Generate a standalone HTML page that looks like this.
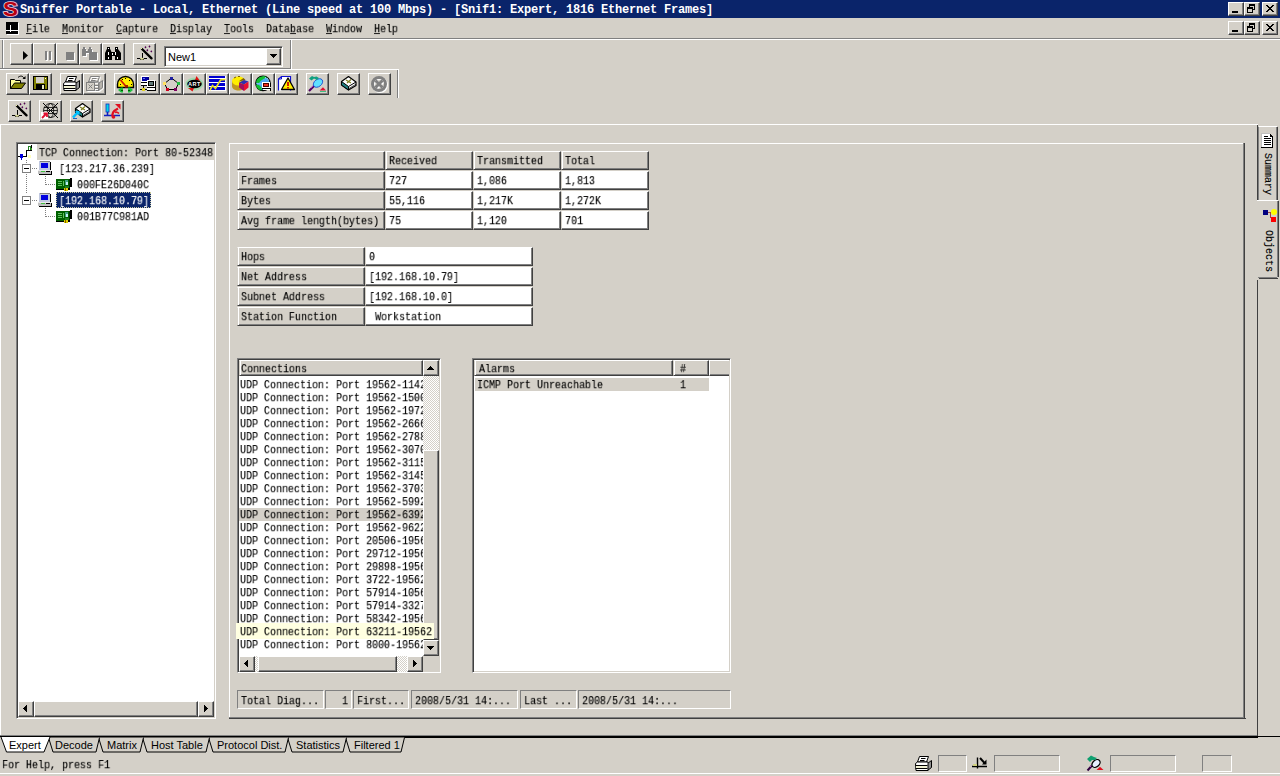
<!DOCTYPE html><html><head><meta charset="utf-8"><title>Sniffer</title><style>
html,body{margin:0;padding:0}
body{width:1280px;height:776px;background:#d4d0c8;position:relative;overflow:hidden;font-family:"Liberation Mono",monospace}
div{position:absolute;box-sizing:border-box}
svg{position:absolute;display:block}
.m{font:12px/12px "Liberation Mono",monospace;white-space:pre;color:#000;transform:scale(.8333,.92);transform-origin:0 100%;will-change:transform;-webkit-text-stroke-width:.15px}
.mb{font:bold 12px/12px "Liberation Mono",monospace;letter-spacing:-0.2px;white-space:pre;color:#fff}
.s{font:11px/12px "Liberation Sans",sans-serif;white-space:pre;color:#000}
.btn{background:#d4d0c8;border:1px solid;border-color:#fff #404040 #404040 #fff;box-shadow:inset -1px -1px 0 #808080}
.cellr{background:#d4d0c8;border:1px solid;border-color:#fff #404040 #404040 #d4d0c8;box-shadow:inset 1px 0 0 #fff, inset -1px -1px 0 #808080}
.cellw{background:#fff;border:1px solid;border-color:#fff #404040 #404040 #d4d0c8;box-shadow:inset -1px -1px 0 #808080}
.sunk1{border:1px solid;border-color:#808080 #fff #fff #808080}
.sunk2{border:1px solid;border-color:#808080 #fff #fff #808080;box-shadow:inset 1px 1px 0 #404040, inset -1px -1px 0 #d4d0c8}
.chk{background-color:#fff;background-image:linear-gradient(45deg,#d4d0c8 25%,transparent 25%,transparent 75%,#d4d0c8 75%),linear-gradient(45deg,#d4d0c8 25%,transparent 25%,transparent 75%,#d4d0c8 75%);background-size:2px 2px;background-position:0 0,1px 1px}
u{text-decoration:none;display:inline-block;height:10px;border-bottom:1px solid #000}
</style></head><body><div class="" style="left:0px;top:0px;width:1280px;height:18px;background:#0a246a"></div>
<div class="mb" style="left:20px;top:4px;">Sniffer Portable - Local, Ethernet (Line speed at 100 Mbps) - [Snif1: Expert, 1816 Ethernet Frames]</div>
<svg style="left:1px;top:0px" width="19" height="18" viewBox="0 0 19 18"><text x="9.5" y="16" text-anchor="middle" font-family="Liberation Sans" font-weight="bold" font-size="20" fill="#b80010" stroke="#f0d0e0" stroke-width="1.6" paint-order="stroke" transform="translate(9.5 0) scale(1.12 1) translate(-9.5 0)">S</text></svg>
<div class="btn" style="left:1228px;top:2px;width:16px;height:14px;"></div>
<div class="btn" style="left:1244px;top:2px;width:16px;height:14px;"></div>
<div class="btn" style="left:1262px;top:2px;width:16px;height:14px;"></div>
<div class="" style="left:1232px;top:11px;width:6px;height:2px;background:#000"></div>
<svg style="left:1244px;top:2px" width="16" height="14" viewBox="0 0 16 14" shape-rendering="crispEdges"><path d="M5 2h6v2h-6z M5 4h1v1h-1z M10 4h1v4h-1z M9 7h1v1h-1z" fill="#000"/><path d="M3 5h6v2h-6z M3 7h1v4h-1z M8 7h1v4h-1z M3 10h6v1h-6z" fill="#000"/></svg>
<svg style="left:1262px;top:2px" width="16" height="14" viewBox="0 0 16 14" shape-rendering="crispEdges"><path d="M4 3h2v1h1v1h2v-1h1v-1h2v1h-1v1h-1v1h-1v1h1v1h1v1h1v1h-2v-1h-1v-1h-2v1h-1v1h-2v-1h1v-1h1v-1h1v-1h-1v-1h-1v-1h-1z" fill="#000"/></svg>
<div class="btn" style="left:1228px;top:21px;width:16px;height:14px;"></div>
<div class="btn" style="left:1244px;top:21px;width:16px;height:14px;"></div>
<div class="btn" style="left:1262px;top:21px;width:16px;height:14px;"></div>
<div class="" style="left:1232px;top:30px;width:6px;height:2px;background:#000"></div>
<svg style="left:1244px;top:21px" width="16" height="14" viewBox="0 0 16 14" shape-rendering="crispEdges"><path d="M5 2h6v2h-6z M5 4h1v1h-1z M10 4h1v4h-1z M9 7h1v1h-1z" fill="#000"/><path d="M3 5h6v2h-6z M3 7h1v4h-1z M8 7h1v4h-1z M3 10h6v1h-6z" fill="#000"/></svg>
<svg style="left:1262px;top:21px" width="16" height="14" viewBox="0 0 16 14" shape-rendering="crispEdges"><path d="M4 3h2v1h1v1h2v-1h1v-1h2v1h-1v1h-1v1h-1v1h1v1h1v1h1v1h-2v-1h-1v-1h-2v1h-1v1h-2v-1h1v-1h1v-1h1v-1h-1v-1h-1v-1h-1z" fill="#000"/></svg>
<svg style="left:6px;top:22px" width="13" height="13" viewBox="0 0 13 13" shape-rendering="crispEdges"><rect width="12" height="12" fill="#000"/><rect x="12" y="1" width="1" height="12" fill="#fff"/><rect x="1" y="12" width="12" height="1" fill="#fff"/><rect x="0" y="8" width="12" height="1" fill="#fff"/><rect x="4" y="3" width="1" height="5" fill="#fff"/><rect x="3" y="8" width="3" height="1" fill="#fff"/><rect x="4" y="9" width="1" height="1" fill="#fff"/></svg>
<div class="m" style="left:26px;top:23px"><u>F</u>ile</div>
<div class="m" style="left:62px;top:23px"><u>M</u>onitor</div>
<div class="m" style="left:116px;top:23px"><u>C</u>apture</div>
<div class="m" style="left:170px;top:23px"><u>D</u>isplay</div>
<div class="m" style="left:224px;top:23px"><u>T</u>ools</div>
<div class="m" style="left:266px;top:23px">Data<u>b</u>ase</div>
<div class="m" style="left:326px;top:23px"><u>W</u>indow</div>
<div class="m" style="left:374px;top:23px"><u>H</u>elp</div>
<div class="" style="left:0px;top:38px;width:1280px;height:1px;background:#808080"></div>
<div class="" style="left:0px;top:39px;width:1280px;height:1px;background:#ffffff"></div>
<div class="" style="left:0px;top:68px;width:291px;height:1px;background:#808080"></div>
<div class="" style="left:0px;top:69px;width:399px;height:1px;background:#ffffff"></div>
<div class="" style="left:290px;top:40px;width:1px;height:28px;background:#808080"></div>
<div class="" style="left:291px;top:40px;width:1px;height:29px;background:#ffffff"></div>
<div class="" style="left:2px;top:40px;width:1px;height:28px;background:#808080"></div>
<div class="" style="left:3px;top:40px;width:1px;height:28px;background:#ffffff"></div>
<div class="btn" style="left:10px;top:43px;width:23px;height:22px;"></div>
<div class="btn" style="left:33px;top:43px;width:23px;height:22px;"></div>
<div class="btn" style="left:56px;top:43px;width:23px;height:22px;"></div>
<div class="btn" style="left:79px;top:43px;width:23px;height:22px;"></div>
<div class="btn" style="left:102px;top:43px;width:23px;height:22px;"></div>
<div class="btn" style="left:133px;top:43px;width:23px;height:22px;"></div>
<div class="sunk2" style="left:164px;top:46px;width:119px;height:21px;background:#fff"></div>
<div class="s" style="left:168px;top:51px;">New1</div>
<div class="btn" style="left:266px;top:48px;width:15px;height:17px;"></div>
<svg style="left:270px;top:54px" width="7" height="4" viewBox="0 0 7 4" shape-rendering="crispEdges"><path d="M0 0h7v1h-1v1h-1v1h-1v1h-1v-1h-1v-1h-1v-1h-1z" fill="#000"/></svg>
<div class="" style="left:397px;top:70px;width:1px;height:28px;background:#808080"></div>
<div class="" style="left:398px;top:69px;width:1px;height:29px;background:#ffffff"></div>
<div class="btn" style="left:6px;top:73px;width:23px;height:22px;"></div>
<div class="btn" style="left:29px;top:73px;width:23px;height:22px;"></div>
<div class="btn" style="left:60px;top:73px;width:23px;height:22px;"></div>
<div class="btn" style="left:83px;top:73px;width:23px;height:22px;"></div>
<div class="btn" style="left:114px;top:73px;width:23px;height:22px;"></div>
<div class="btn" style="left:137px;top:73px;width:23px;height:22px;"></div>
<div class="btn" style="left:160px;top:73px;width:23px;height:22px;"></div>
<div class="btn" style="left:183px;top:73px;width:23px;height:22px;"></div>
<div class="btn" style="left:206px;top:73px;width:23px;height:22px;"></div>
<div class="btn" style="left:229px;top:73px;width:23px;height:22px;"></div>
<div class="btn" style="left:252px;top:73px;width:23px;height:22px;"></div>
<div class="btn" style="left:275px;top:73px;width:23px;height:22px;"></div>
<div class="btn" style="left:306px;top:73px;width:23px;height:22px;"></div>
<div class="btn" style="left:337px;top:73px;width:23px;height:22px;"></div>
<div class="btn" style="left:368px;top:73px;width:23px;height:22px;"></div>
<div class="btn" style="left:8px;top:100px;width:23px;height:22px;"></div>
<div class="btn" style="left:39px;top:100px;width:23px;height:22px;"></div>
<div class="btn" style="left:70px;top:100px;width:23px;height:22px;"></div>
<div class="btn" style="left:101px;top:100px;width:23px;height:22px;"></div>
<svg style="left:10px;top:43px" width="23" height="22" viewBox="0 0 23 22"><path d="M13 8v9l5-4.5z" fill="#000"/></svg>
<svg style="left:33px;top:43px" width="23" height="22" viewBox="0 0 23 22"><g transform="translate(1,1)" fill="#fff" stroke="#fff"><rect x="12" y="8" width="2" height="9" stroke="none"/><rect x="16" y="8" width="2" height="9" stroke="none"/></g><g fill="#808080" stroke="#808080"><rect x="12" y="8" width="2" height="9" stroke="none"/><rect x="16" y="8" width="2" height="9" stroke="none"/></g></svg>
<svg style="left:56px;top:43px" width="23" height="22" viewBox="0 0 23 22"><g transform="translate(1,1)" fill="#fff" stroke="#fff"><rect x="10" y="9" width="8" height="8" stroke="none"/></g><g fill="#808080" stroke="#808080"><rect x="10" y="9" width="8" height="8" stroke="none"/></g></svg>
<svg style="left:79px;top:43px" width="23" height="22" viewBox="0 0 23 22"><g transform="translate(1,1)" fill="#fff" stroke="#fff"><path d="M4 4h2v2h1v7h-4v-7h1z" stroke="none"/><path d="M10 4h2v2h1v3h-4v-3h1z" stroke="none"/><rect x="6" y="8" width="4" height="2" stroke="none"/><rect x="10" y="9" width="8" height="8" stroke="none"/></g><g fill="#808080" stroke="#808080"><path d="M4 4h2v2h1v7h-4v-7h1z" stroke="none"/><path d="M10 4h2v2h1v3h-4v-3h1z" stroke="none"/><rect x="6" y="8" width="4" height="2" stroke="none"/><rect x="10" y="9" width="8" height="8" stroke="none"/></g></svg>
<svg style="left:102px;top:43px" width="23" height="22" viewBox="0 0 23 22"><g fill="#000"><rect x="5" y="4" width="3" height="3"/><rect x="13" y="4" width="3" height="3"/><path d="M5 6h3l2 4v7h-6v-7z"/><path d="M13 6h3l2 4v7h-6v-7z" transform="translate(21,0) scale(-1,1) translate(0,0)"/><path d="M13 6h3l3 4v7h-6v-7z"/><rect x="9" y="9" width="4" height="4"/></g><g fill="#fff"><rect x="6" y="5" width="1" height="1"/><rect x="14" y="5" width="1" height="1"/><rect x="6" y="9" width="1" height="3"/><rect x="13" y="9" width="1" height="3"/><rect x="6" y="14" width="1" height="2"/><rect x="15" y="14" width="1" height="2"/><rect x="10" y="10" width="1" height="2"/></g></svg>
<svg style="left:133px;top:43px" width="23" height="22" viewBox="0 0 23 22"><path d="M9.500 10v5M4 15.500h10" stroke="#000" stroke-width="1" fill="none"/><path d="M7 16.500h4" stroke="#000" stroke-width="1"/><ellipse cx="9" cy="15.800" rx="2" ry="1" fill="#e0e0a0"/><path d="M9 6l9.500 9.300" stroke="#000" stroke-width="2.400" stroke-linecap="round"/><rect x="8" y="5" width="1" height="1" fill="#f0f0a0"/><g fill="#500050"><path d="M12.500 3l1 1.200l-1 1.200l-1-1.200z"/><path d="M16.500 2.300l1 1.200l-1 1.200l-1-1.200z"/><path d="M14.300 6.100l1 1.200l-1 1.200l-1-1.200z"/><path d="M18.300 7.200l1 1.200l-1 1.200l-1-1.200z"/></g></svg>
<svg style="left:6px;top:73px" width="23" height="22" viewBox="0 0 23 22"><path d="M4.500 15.500v-9h4l1 1h5v8z" fill="#ffff99" stroke="#000"/><path d="M4.500 15.500l4-5.500h11l-4 5.500z" fill="#808000" stroke="#000"/><path d="M12 4.500c2-2 5-2 6 1" fill="none" stroke="#000"/><path d="M16.500 6h3v-3z" fill="#000"/></svg>
<svg style="left:29px;top:73px" width="23" height="22" viewBox="0 0 23 22"><rect x="4.5" y="3.5" width="14" height="13" fill="#808000" stroke="#000"/><rect x="7" y="4" width="8" height="6" fill="#d4d0c8"/><rect x="7" y="11" width="9" height="6" fill="#000"/><rect x="13" y="12" width="2" height="4" fill="#e8e8c0"/><rect x="16" y="5" width="1" height="1" fill="#fff"/></svg>
<svg style="left:60px;top:73px" width="23" height="22" viewBox="0 0 23 22"><path d="M7.500 3.500h9l-2 5.500h-9z" fill="#fff" stroke="#000"/><path d="M9 5.500h4.500M8 7.500h4.500" stroke="#000"/><path d="M15.500 10.500l4-3v7l-4 3z" fill="#909090" stroke="#000"/><path d="M3.500 10.500l2-1.500h10.500v1.500v7h-12z" fill="#fff" stroke="#000"/><path d="M3.500 12.500h12M3.500 15.500h12" stroke="#000"/><rect x="4" y="13" width="11" height="2" fill="#f0f0d0"/></svg>
<svg style="left:83px;top:73px" width="23" height="22" viewBox="0 0 23 22"><g transform="translate(1,1)"><path d="M7.500 3.500h9l-2 5.500h-9z" fill="none" stroke="#fff"/><path d="M9 5.500h4.500M8 7.500h4.500" stroke="#fff"/><path d="M15.500 10.500l4-3v7l-4 3z" fill="none" stroke="#fff"/><path d="M3.500 10.500l2-1.500h10.500v1.500v7h-12z" fill="none" stroke="#fff"/><path d="M3.500 12.500h12M3.500 15.500h12" stroke="#fff"/></g><path d="M7.500 3.500h9l-2 5.500h-9z" fill="none" stroke="#808080"/><path d="M9 5.500h4.500M8 7.500h4.500" stroke="#808080"/><path d="M15.500 10.500l4-3v7l-4 3z" fill="#b8b4ac" stroke="#808080"/><path d="M3.500 10.500l2-1.500h10.500v1.500v7h-12z" fill="none" stroke="#808080"/><path d="M3.500 12.500h12M3.500 15.500h12" stroke="#808080"/><rect x="3.500" y="9.500" width="8" height="8" fill="#d4d0c8" stroke="#808080"/><path d="M5.500 11.500l4 4M9.500 11.500l-4 4" stroke="#808080"/><path d="M12.500 18.500v-1M4.500 18.500h8" stroke="#fff"/></svg>
<svg style="left:114px;top:73px" width="23" height="22" viewBox="0 0 23 22"><path d="M3.500 14.500v-3a8 8 0 0 1 16 0v3z" fill="#ffee00" stroke="#000" stroke-width="1.400"/><path d="M12.500 14l-6-7" stroke="#d02000" stroke-width="1.800"/><path d="M11 12h3v2.500h-3z" fill="#a02000"/><g fill="#000"><rect x="6" y="11" width="1" height="1"/><rect x="8" y="6" width="1" height="1"/><rect x="11" y="5" width="1" height="1"/><rect x="15" y="7" width="1" height="1"/><rect x="17" y="11" width="1" height="1"/></g><path d="M4 17l3-2.500h2v5h-2z" fill="#20c040"/><path d="M19 17l-3-2.500h-2v5h2z" fill="#20c040"/><path d="M7 17.500h2M14 17.500h2" stroke="#006000"/></svg>
<svg style="left:137px;top:73px" width="23" height="22" viewBox="0 0 23 22"><g shape-rendering="crispEdges"><rect x="4" y="3" width="8" height="6" fill="#fff"/><rect x="5" y="4" width="6" height="4" fill="#0000a0"/><rect x="6" y="5" width="2" height="1" fill="#6070ff"/><rect x="11" y="4" width="1" height="5" fill="#000080"/><rect x="4" y="9" width="7" height="1" fill="#000"/><rect x="4" y="10" width="6" height="2" fill="#fff"/><rect x="4" y="12" width="6" height="1" fill="#000"/><rect x="6" y="13" width="1" height="3" fill="#000"/><rect x="3" y="16" width="7" height="1" fill="#000"/><rect x="5" y="15" width="3" height="3" fill="#e0d020"/><rect x="10" y="7" width="8" height="7" fill="#fff"/><rect x="11" y="8" width="6" height="5" fill="#000"/><rect x="12" y="9" width="4" height="3" fill="#607878"/><rect x="18" y="8" width="1" height="9" fill="#000"/><rect x="10" y="14" width="8" height="1" fill="#000"/><rect x="10" y="15" width="8" height="2" fill="#fff"/><rect x="10" y="17" width="9" height="1" fill="#000"/></g></svg>
<svg style="left:160px;top:73px" width="23" height="22" viewBox="0 0 23 22"><path d="M11.500 5l-7 5.500l3 6h8l3-6z" fill="none" stroke="#000"/><rect x="10" y="4" width="3" height="3" fill="#2020a0"/><rect x="3" y="9" width="3" height="3" fill="#ffe060"/><rect x="17" y="9" width="3" height="3" fill="#20c040"/><rect x="6" y="15" width="3" height="3" fill="#d00020"/><rect x="14" y="15" width="3" height="3" fill="#800060"/></svg>
<svg style="left:183px;top:73px" width="23" height="22" viewBox="0 0 23 22"><ellipse cx="11.500" cy="11" rx="9" ry="6.500" fill="#80e0a0" opacity=".6"/><path d="M12 7l1.500-4l3.500 5z" fill="#e01010"/><path d="M11 15l-1.500 3.500l-4.500-3.500z" fill="#e01010"/><ellipse cx="11.500" cy="11" rx="7.300" ry="4.200" fill="#000"/><text x="11.500" y="13" font-family="Liberation Sans" font-weight="bold" font-size="5.500" fill="#fff" text-anchor="middle" letter-spacing=".5">ART</text></svg>
<svg style="left:206px;top:73px" width="23" height="22" viewBox="0 0 23 22"><rect x="3" y="3" width="17" height="15" fill="#fff"/><g fill="#0000d0"><rect x="3" y="3" width="16" height="2"/><rect x="3" y="6" width="16" height="3"/><rect x="3" y="10" width="16" height="3"/><rect x="3" y="14" width="16" height="3"/></g><path d="M4 17l2.500-4.500l3 3l5-8.500l5-.5" fill="none" stroke="#e8e020" stroke-width="1.600"/></svg>
<svg style="left:229px;top:73px" width="23" height="22" viewBox="0 0 23 22"><path d="M3 8v5c0 6 13 6 13 0v-5z" fill="#c09820"/><ellipse cx="9.500" cy="8" rx="6.500" ry="4.500" fill="#ffee00"/><path d="M9.500 8.500l5-3.500l2 2z" fill="#806000"/><path d="M10 9.500l5-2.500l4.500 1.500l-4.500 3z" fill="#3030b0"/><path d="M10 9.500l5 2v6.500l-5-3.500z" fill="#a01060"/><path d="M15 11.500l4.500-3v6l-4.500 3.500z" fill="#e81030"/><path d="M5 5l2-1M9 3.500h2" stroke="#806000" stroke-width="1"/></svg>
<svg style="left:252px;top:73px" width="23" height="22" viewBox="0 0 23 22"><circle cx="11" cy="10.300" r="7.200" fill="#50a8f0" stroke="#000" stroke-width="1.400"/><path d="M4 9.500l.8-3l3-2.500l4-1l3.500 1.200l-3.500 1.500l-3 2l-2 2.500z" fill="#10c030"/><path d="M4 11.500l3 .5l2.500 2.500v3l-3-1l-2.200-3z" fill="#10c030"/><path d="M13 4.500l3 1.500l1.500 2" stroke="#a0e8ff" stroke-width="1.200" fill="none" stroke-dasharray="1 1"/><path d="M4.500 10.500l5 .5" stroke="#a0e8ff" stroke-width="1" stroke-dasharray="1 1"/><g shape-rendering="crispEdges"><rect x="10" y="9" width="8" height="6" fill="#fff"/><rect x="11" y="10" width="6" height="4" fill="#500000"/><rect x="12" y="11" width="4" height="2" fill="#f03020"/><rect x="10" y="15" width="8" height="1" fill="#000"/><rect x="11" y="16" width="7" height="1" fill="#fff"/><rect x="18" y="10" width="1" height="4" fill="#000"/><rect x="18" y="15" width="1" height="3" fill="#000"/></g></svg>
<svg style="left:275px;top:73px" width="23" height="22" viewBox="0 0 23 22"><path d="M3.500 17.500v-11.500l3-2.500h9v14" fill="#fff" stroke="#1010d0" stroke-width="1.200"/><path d="M3.500 6h3v-2.500" fill="none" stroke="#1010d0"/><path d="M13 5l-6.500 11.500h13z" fill="#ffee00" stroke="#000" stroke-width="1.300" stroke-linejoin="round"/><rect x="12" y="9" width="2" height="4" fill="#d02000"/><rect x="12" y="14" width="2" height="1.500" fill="#d02000"/></svg>
<svg style="left:306px;top:73px" width="23" height="22" viewBox="0 0 23 22"><path d="M8.500 12.500l-5.500 5.500" stroke="#500060" stroke-width="2.200"/><path d="M8 12l-3 3" stroke="#c050d0" stroke-width=".8"/><ellipse cx="12" cy="10" rx="5.200" ry="3.600" fill="#60e0ff" stroke="#2050d0" stroke-width=".9" transform="rotate(-38 12 10)"/><path d="M3 5.500l3-2.500l2 1l2.500-.5l2.500 1.500l-2 2l-3-1.500l-2.500 2z" fill="#10a080"/><path d="M13.500 17.500l3.500-3.200l3 3.200z" fill="#e01030"/><path d="M14 18.500h6" stroke="#40c080" /></svg>
<svg style="left:337px;top:73px" width="23" height="22" viewBox="0 0 23 22"><path d="M4.500 8.500l7-5l7.500 5.500v3.500l-7.500 4.500l-7-5z" fill="#fff" stroke="#000" stroke-width="1.200" stroke-linejoin="round"/><path d="M4.500 8.500l7 5v3.500l-7-5z" fill="#208080" stroke="#000" stroke-width="1"/><path d="M11.500 13.500l7.500-4.500" stroke="#000"/><path d="M12 15.500l7-4.300" stroke="#000" stroke-width=".7"/><path d="M9 7l5 3M14 6.500l-4 3.500" stroke="#808020" stroke-width="1.200"/></svg>
<svg style="left:368px;top:73px" width="23" height="22" viewBox="0 0 23 22"><g transform="translate(1,1)" fill="#fff" stroke="#fff"><circle cx="11" cy="11" r="6.500" fill="none" stroke-width="3"/><path d="M7.500 7.500l7 7M14.500 7.500l-7 7" stroke-width="3" fill="none"/></g><g fill="#808080" stroke="#808080"><circle cx="11" cy="11" r="6.500" fill="none" stroke-width="3"/><path d="M7.500 7.500l7 7M14.500 7.500l-7 7" stroke-width="3" fill="none"/></g></svg>
<svg style="left:8px;top:100px" width="23" height="22" viewBox="0 0 23 22"><path d="M9.500 10v5M4 15.500h10" stroke="#000" stroke-width="1" fill="none"/><path d="M7 16.500h4" stroke="#000" stroke-width="1"/><ellipse cx="9" cy="15.800" rx="2" ry="1" fill="#e0e0a0"/><path d="M9 6l9.500 9.300" stroke="#000" stroke-width="2.400" stroke-linecap="round"/><rect x="8" y="5" width="1" height="1" fill="#f0f0a0"/><g fill="#500050"><path d="M12.500 3l1 1.200l-1 1.200l-1-1.200z"/><path d="M16.500 2.300l1 1.200l-1 1.200l-1-1.200z"/><path d="M14.300 6.100l1 1.200l-1 1.200l-1-1.200z"/><path d="M18.300 7.200l1 1.200l-1 1.200l-1-1.200z"/></g></svg>
<svg style="left:39px;top:100px" width="23" height="22" viewBox="0 0 23 22"><g fill="none" stroke="#000" stroke-width=".8"><circle cx="11.500" cy="10.500" r="7"/><ellipse cx="11.500" cy="10.500" rx="3.200" ry="7"/><path d="M5 7.500h13M5 13.500h13M4.500 10.500h14"/><path d="M4 3l15 15M19 3l-15 15" stroke-width="1"/></g><rect x="2" y="12" width="7" height="7" fill="#fff"/><path d="M3 18l4-4M4.500 13.500h3.500v3.500" stroke="#e01030" stroke-width="1.800" fill="none"/></svg>
<svg style="left:70px;top:100px" width="23" height="22" viewBox="0 0 23 22"><g transform="translate(1,0)"><path d="M4.500 8.500l7-5l7.500 5.500v3.500l-7.500 4.500l-7-5z" fill="#fff" stroke="#000" stroke-width="1.200" stroke-linejoin="round"/><path d="M4.500 8.500l7 5v3.500l-7-5z" fill="#208080" stroke="#000" stroke-width="1"/><path d="M11.500 13.500l7.500-4.500" stroke="#000"/><path d="M12 15.500l7-4.300" stroke="#000" stroke-width=".7"/><path d="M9 7l5 3M14 6.500l-4 3.500" stroke="#808020" stroke-width="1.200"/></g><path d="M3 17.500l4.500-5" stroke="#00c0ff" stroke-width="2.600"/><path d="M5 11h4.500v5z" fill="#00c0ff"/><path d="M3 18.500h4" stroke="#2060c0"/></svg>
<svg style="left:101px;top:100px" width="23" height="22" viewBox="0 0 23 22"><rect x="5" y="4" width="3" height="8" fill="#00d8e8" stroke="#1030c0" stroke-width=".8"/><path d="M6.500 12v3M3 15.500h16" stroke="#1020c0" stroke-width="1.600"/><path d="M12 17.500c-2-4 1-7 5-9" fill="none" stroke="#e01020" stroke-width="2.200"/><path d="M14 4h5.500v5.500z" fill="#e01020"/><circle cx="12.500" cy="17" r="1.800" fill="#e01020"/><path d="M14 12.500c2-1 3 0 4 1" stroke="#e01020" stroke-width="1.600" fill="none"/></svg>
<div class="" style="left:0px;top:124px;width:1258px;height:1px;background:#ffffff"></div>
<div class="" style="left:0px;top:124px;width:1px;height:612px;background:#ffffff"></div>
<div class="" style="left:0px;top:735px;width:1258px;height:1px;background:#808080"></div>
<div class="" style="left:0px;top:736px;width:1280px;height:1px;background:#000"></div>
<div class="" style="left:50px;top:737px;width:1208px;height:1px;background:#000"></div>
<div class="" style="left:1257px;top:125px;width:1px;height:75px;background:#404040"></div>
<div class="" style="left:1257px;top:280px;width:1px;height:456px;background:#404040"></div>
<div class="sunk2" style="left:16px;top:142px;width:200px;height:577px;background:#fff"></div>
<div class="" style="left:229px;top:143px;width:1015px;height:1px;background:#ffffff"></div>
<div class="" style="left:229px;top:143px;width:1px;height:575px;background:#ffffff"></div>
<div class="" style="left:229px;top:717px;width:1016px;height:1px;background:#808080"></div>
<div class="" style="left:229px;top:718px;width:1017px;height:1px;background:#404040"></div>
<div class="" style="left:1243px;top:143px;width:1px;height:575px;background:#808080"></div>
<div class="" style="left:1244px;top:143px;width:1px;height:576px;background:#404040"></div>
<div class="" style="left:37px;top:144px;width:177px;height:16px;background:#d4d0c8"></div>
<div class="m" style="left:39px;top:147px;">TCP Connection: Port 80-52348</div>
<div class="m" style="left:59px;top:163px;">[123.217.36.239]</div>
<div class="m" style="left:77px;top:179px;">000FE26D040C</div>
<div class="" style="left:56px;top:192px;width:95px;height:16px;background:#0a246a;border:1px dotted #c8c8a0"></div>
<div class="m" style="left:59px;top:195px;color:#fff">[192.168.10.79]</div>
<div class="m" style="left:77px;top:211px;">001B77C981AD</div>
<div class="" style="left:26px;top:160px;width:1px;height:33px;background-image:linear-gradient(#808080 50%,transparent 50%);background-size:1px 2px"></div>
<div class="" style="left:45px;top:176px;width:1px;height:9px;background-image:linear-gradient(#808080 50%,transparent 50%);background-size:1px 2px"></div>
<div class="" style="left:45px;top:208px;width:1px;height:9px;background-image:linear-gradient(#808080 50%,transparent 50%);background-size:1px 2px"></div>
<div class="" style="left:32px;top:168px;width:6px;height:1px;background-image:linear-gradient(90deg,#808080 50%,transparent 50%);background-size:2px 1px"></div>
<div class="" style="left:32px;top:200px;width:6px;height:1px;background-image:linear-gradient(90deg,#808080 50%,transparent 50%);background-size:2px 1px"></div>
<div class="" style="left:46px;top:184px;width:10px;height:1px;background-image:linear-gradient(90deg,#808080 50%,transparent 50%);background-size:2px 1px"></div>
<div class="" style="left:46px;top:216px;width:10px;height:1px;background-image:linear-gradient(90deg,#808080 50%,transparent 50%);background-size:2px 1px"></div>
<div class="" style="left:22px;top:164px;width:9px;height:9px;background:#fff;border:1px solid #808080"></div>
<div class="" style="left:24px;top:168px;width:5px;height:1px;background:#000"></div>
<div class="" style="left:22px;top:196px;width:9px;height:9px;background:#fff;border:1px solid #808080"></div>
<div class="" style="left:24px;top:200px;width:5px;height:1px;background:#000"></div>
<svg style="left:18px;top:144px" width="16" height="16" viewBox="0 0 16 16" shape-rendering="crispEdges"><path d="M0 12h8v-6h5v-5h1v6h-5v6h-9z" fill="#000"/><rect x="2" y="10" width="3" height="4" fill="#0000e0"/><rect x="3" y="14" width="1" height="2" fill="#0000e0"/><path d="M10 2h3v4h-1v-3h-1v3h-1z" fill="#208020"/><rect x="13" y="4" width="1" height="2" fill="#40a020"/><rect x="10" y="11" width="3" height="3" fill="#ffffc0"/></svg>
<svg style="left:38px;top:161px" width="15" height="14" viewBox="0 0 15 14" shape-rendering="crispEdges"><rect x="1" y="0" width="11" height="9" fill="#c0c8e0"/><rect x="12" y="1" width="1" height="9" fill="#000"/><rect x="2" y="0" width="10" height="1" fill="#808080"/><rect x="3" y="2" width="7" height="5" fill="#0000e0"/><rect x="0" y="9" width="13" height="4" fill="#c0c0c0"/><rect x="0" y="9" width="13" height="1" fill="#e8e8e8"/><rect x="3" y="10" width="4" height="1" fill="#40c040"/><rect x="8" y="10" width="4" height="1" fill="#000"/><rect x="13" y="10" width="1" height="4" fill="#000"/><rect x="1" y="13" width="13" height="1" fill="#000"/></svg>
<svg style="left:38px;top:193px" width="15" height="14" viewBox="0 0 15 14" shape-rendering="crispEdges"><rect x="1" y="0" width="11" height="9" fill="#c0c8e0"/><rect x="12" y="1" width="1" height="9" fill="#000"/><rect x="2" y="0" width="10" height="1" fill="#808080"/><rect x="3" y="2" width="7" height="5" fill="#0000e0"/><rect x="0" y="9" width="13" height="4" fill="#c0c0c0"/><rect x="0" y="9" width="13" height="1" fill="#e8e8e8"/><rect x="3" y="10" width="4" height="1" fill="#40c040"/><rect x="8" y="10" width="4" height="1" fill="#000"/><rect x="13" y="10" width="1" height="4" fill="#000"/><rect x="1" y="13" width="13" height="1" fill="#000"/></svg>
<svg style="left:56px;top:178px" width="17" height="14" viewBox="0 0 17 14" shape-rendering="crispEdges"><rect x="0" y="1" width="14" height="10" fill="#006000"/><rect x="14" y="0" width="2" height="9" fill="#000"/><rect x="13" y="1" width="1" height="10" fill="#003000"/><g fill="#60c060"><rect x="2" y="3" width="4" height="1"/><rect x="2" y="5" width="4" height="1"/><rect x="2" y="7" width="4" height="1"/><rect x="7" y="3" width="1" height="5"/></g><rect x="9" y="2" width="3" height="5" fill="#40a080"/><rect x="10" y="4" width="2" height="3" fill="#c0f0f0"/><rect x="9" y="8" width="4" height="2" fill="#208020"/><rect x="8" y="10" width="4" height="3" fill="#e0d000"/><rect x="9" y="10" width="1" height="3" fill="#806000"/><rect x="0" y="11" width="8" height="1" fill="#000"/><rect x="12" y="10" width="2" height="2" fill="#000"/></svg>
<svg style="left:56px;top:210px" width="17" height="14" viewBox="0 0 17 14" shape-rendering="crispEdges"><rect x="0" y="1" width="14" height="10" fill="#006000"/><rect x="14" y="0" width="2" height="9" fill="#000"/><rect x="13" y="1" width="1" height="10" fill="#003000"/><g fill="#60c060"><rect x="2" y="3" width="4" height="1"/><rect x="2" y="5" width="4" height="1"/><rect x="2" y="7" width="4" height="1"/><rect x="7" y="3" width="1" height="5"/></g><rect x="9" y="2" width="3" height="5" fill="#40a080"/><rect x="10" y="4" width="2" height="3" fill="#c0f0f0"/><rect x="9" y="8" width="4" height="2" fill="#208020"/><rect x="8" y="10" width="4" height="3" fill="#e0d000"/><rect x="9" y="10" width="1" height="3" fill="#806000"/><rect x="0" y="11" width="8" height="1" fill="#000"/><rect x="12" y="10" width="2" height="2" fill="#000"/></svg>
<div class="" style="left:18px;top:701px;width:196px;height:16px;background:#d4d0c8"></div>
<div class="btn" style="left:18px;top:701px;width:16px;height:16px;"></div>
<div class="btn" style="left:198px;top:701px;width:16px;height:16px;"></div>
<div class="btn" style="left:34px;top:701px;width:164px;height:16px;"></div>
<svg style="left:23px;top:705px" width="4" height="7" viewBox="0 0 4 7" shape-rendering="crispEdges"><path d="M3 0h1v7h-1v-1h-1v-1h-1v-1h-1v-1h1v-1h1v-1h1z" fill="#000"/></svg>
<svg style="left:204px;top:705px" width="4" height="7" viewBox="0 0 4 7" shape-rendering="crispEdges"><path d="M0 0h1v1h1v1h1v1h1v1h-1v1h-1v1h-1v1h-1z" fill="#000"/></svg>
<div class="cellr" style="left:237px;top:151px;width:148px;height:19px;"></div>
<div class="cellr" style="left:385px;top:151px;width:88px;height:19px;"></div>
<div class="m" style="left:389px;top:155px;">Received</div>
<div class="cellr" style="left:473px;top:151px;width:88px;height:19px;"></div>
<div class="m" style="left:477px;top:155px;">Transmitted</div>
<div class="cellr" style="left:561px;top:151px;width:88px;height:19px;"></div>
<div class="m" style="left:565px;top:155px;">Total</div>
<div class="cellr" style="left:237px;top:171px;width:148px;height:19px;"></div>
<div class="m" style="left:241px;top:175px;">Frames</div>
<div class="cellw" style="left:385px;top:171px;width:88px;height:19px;"></div>
<div class="m" style="left:389px;top:175px;">727</div>
<div class="cellw" style="left:473px;top:171px;width:88px;height:19px;"></div>
<div class="m" style="left:477px;top:175px;">1,086</div>
<div class="cellw" style="left:561px;top:171px;width:88px;height:19px;"></div>
<div class="m" style="left:565px;top:175px;">1,813</div>
<div class="cellr" style="left:237px;top:191px;width:148px;height:19px;"></div>
<div class="m" style="left:241px;top:195px;">Bytes</div>
<div class="cellw" style="left:385px;top:191px;width:88px;height:19px;"></div>
<div class="m" style="left:389px;top:195px;">55,116</div>
<div class="cellw" style="left:473px;top:191px;width:88px;height:19px;"></div>
<div class="m" style="left:477px;top:195px;">1,217K</div>
<div class="cellw" style="left:561px;top:191px;width:88px;height:19px;"></div>
<div class="m" style="left:565px;top:195px;">1,272K</div>
<div class="cellr" style="left:237px;top:211px;width:148px;height:19px;"></div>
<div class="m" style="left:241px;top:215px;">Avg frame length(bytes)</div>
<div class="cellw" style="left:385px;top:211px;width:88px;height:19px;"></div>
<div class="m" style="left:389px;top:215px;">75</div>
<div class="cellw" style="left:473px;top:211px;width:88px;height:19px;"></div>
<div class="m" style="left:477px;top:215px;">1,120</div>
<div class="cellw" style="left:561px;top:211px;width:88px;height:19px;"></div>
<div class="m" style="left:565px;top:215px;">701</div>
<div class="cellr" style="left:237px;top:247px;width:128px;height:19px;"></div>
<div class="cellw" style="left:365px;top:247px;width:168px;height:19px;"></div>
<div class="m" style="left:241px;top:251px;">Hops</div>
<div class="m" style="left:369px;top:251px;">0</div>
<div class="cellr" style="left:237px;top:267px;width:128px;height:19px;"></div>
<div class="cellw" style="left:365px;top:267px;width:168px;height:19px;"></div>
<div class="m" style="left:241px;top:271px;">Net Address</div>
<div class="m" style="left:369px;top:271px;">[192.168.10.79]</div>
<div class="cellr" style="left:237px;top:287px;width:128px;height:19px;"></div>
<div class="cellw" style="left:365px;top:287px;width:168px;height:19px;"></div>
<div class="m" style="left:241px;top:291px;">Subnet Address</div>
<div class="m" style="left:369px;top:291px;">[192.168.10.0]</div>
<div class="cellr" style="left:237px;top:307px;width:128px;height:19px;"></div>
<div class="cellw" style="left:365px;top:307px;width:168px;height:19px;"></div>
<div class="m" style="left:241px;top:311px;">Station Function</div>
<div class="m" style="left:369px;top:311px;"> Workstation</div>
<div class="sunk2" style="left:237px;top:358px;width:204px;height:315px;background:#fff"></div>
<div class="cellr" style="left:239px;top:360px;width:184px;height:16px;"></div>
<div class="m" style="left:241px;top:363px;">Connections</div>
<div class="btn" style="left:423px;top:360px;width:16px;height:16px;"></div>
<svg style="left:427px;top:366px" width="7" height="4" viewBox="0 0 7 4" shape-rendering="crispEdges"><path d="M3 0h1v1h1v1h1v1h1v1h-7v-1h1v-1h1v-1h1z" fill="#000"/></svg>
<div style="left:239px;top:376px;width:184px;height:280px;overflow:hidden">
<div class="m" style="left:1px;top:3px;">UDP Connection: Port 19562-1142</div>
<div class="m" style="left:1px;top:16px;">UDP Connection: Port 19562-1500</div>
<div class="m" style="left:1px;top:29px;">UDP Connection: Port 19562-1972</div>
<div class="m" style="left:1px;top:42px;">UDP Connection: Port 19562-2666</div>
<div class="m" style="left:1px;top:55px;">UDP Connection: Port 19562-2788</div>
<div class="m" style="left:1px;top:68px;">UDP Connection: Port 19562-3070</div>
<div class="m" style="left:1px;top:81px;">UDP Connection: Port 19562-3115</div>
<div class="m" style="left:1px;top:94px;">UDP Connection: Port 19562-3145</div>
<div class="m" style="left:1px;top:107px;">UDP Connection: Port 19562-3703</div>
<div class="m" style="left:1px;top:120px;">UDP Connection: Port 19562-5992</div>
<div class="" style="left:0px;top:132px;width:184px;height:13px;background:#d4d0c8"></div>
<div class="m" style="left:1px;top:133px;">UDP Connection: Port 19562-6392</div>
<div class="m" style="left:1px;top:146px;">UDP Connection: Port 19562-9622</div>
<div class="m" style="left:1px;top:159px;">UDP Connection: Port 20506-19562</div>
<div class="m" style="left:1px;top:172px;">UDP Connection: Port 29712-19562</div>
<div class="m" style="left:1px;top:185px;">UDP Connection: Port 29898-19562</div>
<div class="m" style="left:1px;top:198px;">UDP Connection: Port 3722-19562</div>
<div class="m" style="left:1px;top:211px;">UDP Connection: Port 57914-1056</div>
<div class="m" style="left:1px;top:224px;">UDP Connection: Port 57914-3327</div>
<div class="m" style="left:1px;top:237px;">UDP Connection: Port 58342-19562</div>
<div class="m" style="left:1px;top:250px;">UDP Connection: Port 63211-19562</div>
<div class="m" style="left:1px;top:263px;">UDP Connection: Port 8000-19562</div>
</div>
<div class="chk" style="left:423px;top:376px;width:16px;height:264px;"></div>
<div class="btn" style="left:423px;top:450px;width:16px;height:190px;"></div>
<div class="btn" style="left:423px;top:640px;width:16px;height:16px;"></div>
<svg style="left:427px;top:646px" width="7" height="4" viewBox="0 0 7 4" shape-rendering="crispEdges"><path d="M0 0h7v1h-1v1h-1v1h-1v1h-1v-1h-1v-1h-1v-1h-1z" fill="#000"/></svg>
<div class="chk" style="left:239px;top:656px;width:184px;height:16px;"></div>
<div class="btn" style="left:239px;top:656px;width:16px;height:16px;"></div>
<svg style="left:244px;top:660px" width="4" height="7" viewBox="0 0 4 7" shape-rendering="crispEdges"><path d="M3 0h1v7h-1v-1h-1v-1h-1v-1h-1v-1h1v-1h1v-1h1z" fill="#000"/></svg>
<div class="btn" style="left:407px;top:656px;width:16px;height:16px;"></div>
<svg style="left:413px;top:660px" width="4" height="7" viewBox="0 0 4 7" shape-rendering="crispEdges"><path d="M0 0h1v1h1v1h1v1h1v1h-1v1h-1v1h-1v1h-1z" fill="#000"/></svg>
<div class="btn" style="left:258px;top:656px;width:139px;height:16px;"></div>
<div class="" style="left:423px;top:656px;width:16px;height:16px;background:#d4d0c8"></div>
<div class="" style="left:236px;top:623px;width:198px;height:16px;background:#ffffe1"></div>
<div class="m" style="left:240px;top:626px;">UDP Connection: Port 63211-19562</div>
<div class="sunk2" style="left:472px;top:358px;width:259px;height:315px;background:#fff"></div>
<div class="cellr" style="left:474px;top:360px;width:199px;height:16px;"></div>
<div class="m" style="left:479px;top:363px;">Alarms</div>
<div class="cellr" style="left:673px;top:360px;width:36px;height:16px;"></div>
<div class="m" style="left:680px;top:363px;">#</div>
<div class="" style="left:709px;top:360px;width:20px;height:16px;background:#d4d0c8;border-top:1px solid #fff;border-left:1px solid #fff;border-bottom:1px solid #404040;box-shadow:inset 0 -1px 0 #808080"></div>
<div class="" style="left:475px;top:378px;width:234px;height:13px;background:#d4d0c8"></div>
<div class="m" style="left:477px;top:379px;">ICMP Port Unreachable</div>
<div class="m" style="left:680px;top:379px;">1</div>
<div class="sunk1" style="left:237px;top:690px;width:87px;height:19px;"></div>
<div class="m" style="left:241px;top:695px;">Total Diag...</div>
<div class="sunk1" style="left:325px;top:690px;width:27px;height:19px;"></div>
<div class="m" style="left:342px;top:695px;">1</div>
<div class="sunk1" style="left:353px;top:690px;width:56px;height:19px;"></div>
<div class="m" style="left:357px;top:695px;">First...</div>
<div class="sunk1" style="left:411px;top:690px;width:107px;height:19px;"></div>
<div class="m" style="left:415px;top:695px;">2008/5/31 14:...</div>
<div class="sunk1" style="left:520px;top:690px;width:57px;height:19px;"></div>
<div class="m" style="left:524px;top:695px;">Last ...</div>
<div class="sunk1" style="left:578px;top:690px;width:153px;height:19px;"></div>
<div class="m" style="left:582px;top:695px;">2008/5/31 14:...</div>
<svg style="left:0;top:736px" width="420" height="18" viewBox="0 0 420 18"><path d="M345.5 1.5 L350 16 L401 16 L404.5 1.5" fill="#d4d0c8" stroke="#000" stroke-width="1"/><path d="M287.5 1.5 L292 16 L343 16 L346.5 1.5" fill="#d4d0c8" stroke="#000" stroke-width="1"/><path d="M208.5 1.5 L213 16 L285 16 L288.5 1.5" fill="#d4d0c8" stroke="#000" stroke-width="1"/><path d="M142.5 1.5 L147 16 L206 16 L209.5 1.5" fill="#d4d0c8" stroke="#000" stroke-width="1"/><path d="M98.5 1.5 L103 16 L140 16 L143.5 1.5" fill="#d4d0c8" stroke="#000" stroke-width="1"/><path d="M48.5 1.5 L53 16 L96 16 L99.5 1.5" fill="#d4d0c8" stroke="#000" stroke-width="1"/><path d="M1 1 L6.5 16 L44 16 L50 1" fill="#fff" stroke="#000" stroke-width="1"/></svg>
<div class="s" style="left:9px;top:739px;">Expert</div>
<div class="s" style="left:55px;top:739px;">Decode</div>
<div class="s" style="left:107px;top:739px;">Matrix</div>
<div class="s" style="left:151px;top:739px;">Host Table</div>
<div class="s" style="left:217px;top:739px;">Protocol Dist.</div>
<div class="s" style="left:296px;top:739px;">Statistics</div>
<div class="s" style="left:354px;top:739px;">Filtered 1</div>
<div class="m" style="left:2px;top:759px;">For Help, press F1</div>
<div class="" style="left:0px;top:773px;width:1280px;height:1px;background:#ffffff"></div>
<div class="sunk1" style="left:938px;top:755px;width:29px;height:17px;"></div>
<div class="sunk1" style="left:994px;top:755px;width:66px;height:17px;"></div>
<div class="sunk1" style="left:1110px;top:755px;width:66px;height:17px;"></div>
<div class="sunk1" style="left:1202px;top:755px;width:30px;height:17px;"></div>
<div class="" style="left:1258px;top:127px;width:1px;height:73px;background:#808080"></div>
<div class="" style="left:1259px;top:126px;width:18px;height:1px;background:#ffffff"></div>
<div class="" style="left:1277px;top:127px;width:1px;height:73px;background:#404040"></div>
<div class="" style="left:1276px;top:127px;width:1px;height:73px;background:#808080"></div>
<div class="" style="left:1257px;top:200px;width:21px;height:1px;background:#ffffff"></div>
<div class="" style="left:1278px;top:201px;width:1px;height:76px;background:#404040"></div>
<div class="" style="left:1277px;top:201px;width:1px;height:76px;background:#808080"></div>
<div class="" style="left:1259px;top:278px;width:19px;height:1px;background:#404040"></div>
<div class="" style="left:1258px;top:277px;width:19px;height:1px;background:#808080"></div>
<div style="left:1261px;top:153px;font:12px/12px 'Liberation Mono',monospace;writing-mode:vertical-rl;white-space:pre;transform:scale(.92,.8333);transform-origin:100% 0;-webkit-text-stroke-width:.15px">Summary</div>
<div style="left:1262px;top:230px;font:12px/12px 'Liberation Mono',monospace;writing-mode:vertical-rl;white-space:pre;transform:scale(.92,.8333);transform-origin:100% 0;-webkit-text-stroke-width:.15px">Objects</div>
<div class="" style="left:1268px;top:212px;width:3px;height:1px;background:#a04040"></div>
<div class="" style="left:1270px;top:212px;width:1px;height:6px;background:#a04040"></div>
<div class="" style="left:1263px;top:210px;width:5px;height:5px;background:#000080"></div>
<div class="" style="left:1271px;top:217px;width:5px;height:5px;background:#ff0000"></div>
<div class="" style="left:1271px;top:209px;width:6px;height:6px;background:#ffff00;border-radius:3px"></div>
<svg style="left:1261px;top:133px" width="13" height="15" viewBox="0 0 13 15" shape-rendering="crispEdges"><path d="M0 0h9v3h3v11h-12z" fill="#fff"/><path d="M0 0h9v1h-8v13h-1z" fill="#c0c0c0"/><path d="M9 1h1v1h1v1h1v12h-12v-1h11v-10h-2z" fill="#000"/><path d="M3 3h4v1h-4zM3 5h7v1h-7zM3 7h7v1h-7zM3 9h7v1h-7zM3 11h7v1h-7z" fill="#000"/></svg>
<svg style="left:912px;top:753px" width="23" height="22" viewBox="0 0 23 22"><path d="M7.500 3.500h9l-2 5.500h-9z" fill="#fff" stroke="#000"/><path d="M9 5.500h4.500M8 7.500h4.500" stroke="#000"/><path d="M15.500 10.500l4-3v7l-4 3z" fill="#909090" stroke="#000"/><path d="M3.500 10.500l2-1.500h10.500v1.500v7h-12z" fill="#fff" stroke="#000"/><path d="M3.500 12.500h12M3.500 15.500h12" stroke="#000"/><rect x="4" y="13" width="11" height="2" fill="#f0f0d0"/></svg>
<svg style="left:971px;top:756px" width="17" height="14" viewBox="0 0 17 14"><path d="M6.500 1.500v11M1 10.500h15" stroke="#000" stroke-width="1.400"/><rect x="2" y="8" width="4" height="2" fill="#d0d080"/><path d="M9 2l5 5.500" stroke="#000" stroke-width="2"/><path d="M11 8.500h4.500v-5z" fill="#000"/></svg>
<svg style="left:1085px;top:754px" width="20" height="18" viewBox="0 0 20 18"><path d="M7 11.500l-4.500 5" stroke="#300040" stroke-width="2"/><path d="M7 11l-2 2" stroke="#c040c0" stroke-width="1"/><ellipse cx="11" cy="9.500" rx="4.600" ry="3.200" fill="#e8f0ff" stroke="#000" stroke-width="1.300" transform="rotate(-40 11 9.500)"/><path d="M2 5l4-3.500l3 1.500l3 1l-2 2l-3 0l-2 2z" fill="#10a070"/><path d="M11.500 16l3.500-3.200l3.500 3.200z" fill="#e01020"/></svg></body></html>
